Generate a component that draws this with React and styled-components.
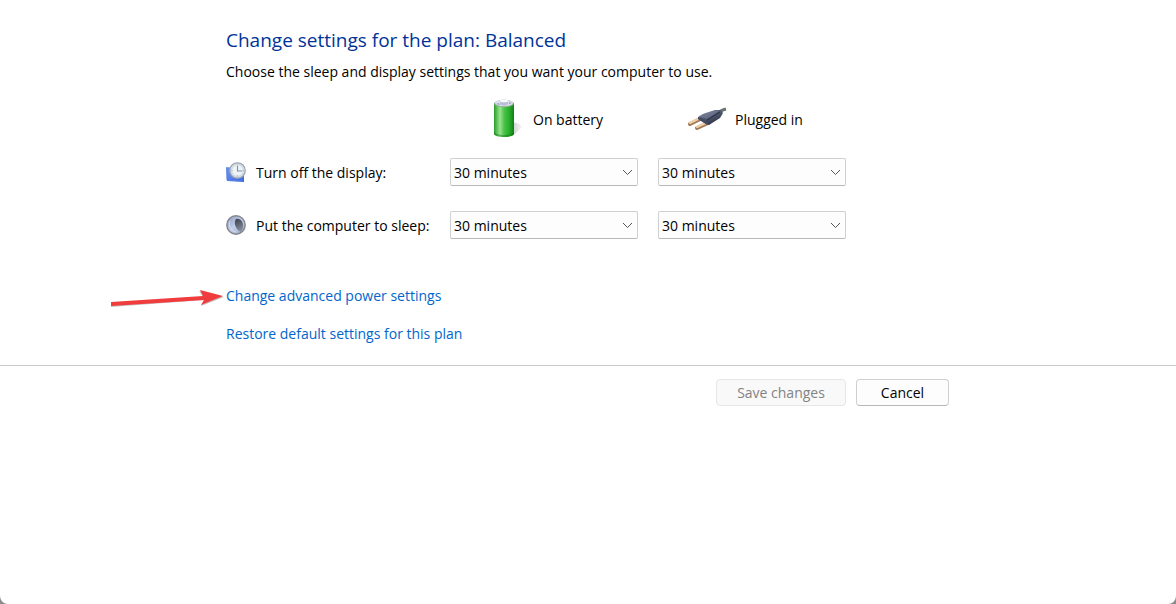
import React from "react";
import styled, { createGlobalStyle } from "styled-components";

const GlobalStyle = createGlobalStyle`
  * {
    box-sizing: border-box;
  }

  body {
    margin: 0;
    background: #8c8c8c;
    color: #000;
    font-family: "Segoe UI", "Open Sans", "Noto Sans", sans-serif;
    font-size: 14px;
    line-height: 20px;
  }

  button, select {
    font: inherit;
  }
`

const Window = styled.div`
  min-height: 100vh;
  background: #fff;
  border-radius: 0 0 8px 8px;
`

const Content = styled.main`
  padding: 26px 24px 21px 226px;
`

const Title = styled.h1`
  margin: 0 0 8px;
  font-size: 19px;
  line-height: 28px;
  font-weight: 400;
  color: #003399;
`

const Intro = styled.p`
  margin: 0 0 16px;
`

const Settings = styled.div`
  display: grid;
  grid-template-columns: 204px 188px 188px;
  column-gap: 20px;
  row-gap: 25px;
  align-items: center;
`

const Heads = styled.div`
  display: grid;
  grid-template-columns: 188px 188px;
  column-gap: 20px;
  margin: 0 0 18px 224px;
`

const ColumnHead = styled.div`
  display: flex;
  align-items: center;
  gap: 8px;
  height: 42px;
  padding-left: ${(props) => props.$inset};
`

const Label = styled.span`
  padding-top: 2px;
`

const RowLabel = styled.div`
  display: flex;
  align-items: center;
  gap: 10px;
  white-space: nowrap;
`

const SelectBox = styled.div`
  display: grid;
  align-items: center;

  > * {
    grid-area: 1 / 1;
  }

  > svg {
    justify-self: end;
    margin-right: 5px;
    pointer-events: none;
  }
`

const Select = styled.select`
  appearance: none;
  width: 100%;
  height: 28px;
  padding: 2px 24px 0 3px;
  border: 1px solid #d0d0d0;
  border-bottom-color: #b8b8b8;
  border-radius: 2px;
  background: #fdfdfd;
  color: #000;
`

const Links = styled.nav`
  display: flex;
  flex-direction: column;
  align-items: flex-start;
  gap: 18px;
  margin-top: 47px;
`

const Link = styled.a`
  position: relative;
  color: #0066cc;
  text-decoration: none;
`

const Arrow = styled.svg`
  position: absolute;
  right: 100%;
  top: 0;
`

const Footer = styled.footer`
  display: flex;
  gap: 10px;
  padding: 13px 24px 13px 716px;
  border-top: 1px solid #c8c8c8;
`

const Button = styled.button`
  height: 27px;
  width: ${(props) => (props.$wide ? "130px" : "93px")};
  padding: 0;
  border: 1px solid #d0d0d0;
  border-bottom-color: #b8b8b8;
  border-radius: 4px;
  background: #fdfdfd;
  color: #000;

  &:disabled {
    border-color: #e6e6e6;
    background: #f9f9f9;
    color: #838383;
  }
`

const BatteryIcon = () => (
  <svg width="40" height="42" viewBox="0 0 40 42" aria-hidden="true">
    <defs>
      <linearGradient id="cell">
        <stop offset="0" stopColor="#2c9a30" />
        <stop offset="0.15" stopColor="#5cc458" />
        <stop offset="0.3" stopColor="#9be292" />
        <stop offset="0.5" stopColor="#4cc547" />
        <stop offset="0.78" stopColor="#27ab2a" />
        <stop offset="1" stopColor="#0f8018" />
      </linearGradient>
      <linearGradient id="cellShadow">
        <stop offset="0" stopColor="#777" stopOpacity="0.7" />
        <stop offset="1" stopColor="#aaa" stopOpacity="0.1" />
      </linearGradient>
    </defs>
    <path d="M28 24 35 26 37 29 30 36 20 39z" fill="url(#cellShadow)" />
    <path d="M9 5v31c1 4 19 4 20 0V5z" fill="url(#cell)" />
    <path d="M9 34v2c1 4 19 4 20 0v-2c-2 4-18 4-20 0z" fill="#08700e" opacity="0.4" />
    <ellipse cx="19" cy="5.5" rx="10" ry="3.7" fill="#8fae97" />
    <ellipse cx="19" cy="5" rx="9" ry="3.2" fill="#dcdfec" />
    <path d="M15 3c1-2 7-2 8 0v3c-2 2-6 2-8 0z" fill="#b9bdd6" />
    <ellipse cx="19" cy="2.8" rx="4" ry="1.5" fill="#fafaff" />
    <path d="m11 6 3-1 1 2zm13-2 3 1-3 1z" fill="#9ba0bb" />
  </svg>
)

const PlugIcon = () => (
  <svg width="40" height="42" viewBox="0 0 40 42" aria-hidden="true">
    <defs>
      <linearGradient id="plug" x1="0" y1="0" x2="0.7" y2="1">
        <stop offset="0" stopColor="#7c849d" />
        <stop offset="0.5" stopColor="#515870" />
        <stop offset="1" stopColor="#292d3e" />
      </linearGradient>
    </defs>
    <path d="M31 14c3-1 4-2 8-3" fill="none" stroke="#69766f" strokeWidth="3" />
    <path d="m3 26 10-5M10 30l11-5" stroke="#a37a58" strokeWidth="4" strokeLinecap="round" />
    <path d="m3 25 10-5M10 29l11-5" stroke="#f0d2aa" strokeWidth="2" strokeLinecap="round" />
    <path d="m11 19 5-3 12-4 6 0 2 3-3 5-11 7-3-1-8-5z" fill="url(#plug)" />
    <path d="m11 19 8 3 3 5-3-1-8-5z" fill="#434a62" />
    <path d="m12 18 6-3 11-3 3 1-12 8z" fill="#8991ab" opacity="0.4" />
    <path d="m20 22 13-8" stroke="#252939" strokeWidth="1" />
  </svg>
)

const DisplayIcon = () => (
  <svg width="20" height="20" viewBox="0 0 20 20" aria-hidden="true">
    <defs>
      <linearGradient id="screen" x2="1" y2="1">
        <stop offset="0" stopColor="#7199ef" />
        <stop offset="1" stopColor="#3765df" />
      </linearGradient>
    </defs>
    <path d="M0 5 12 6 18 12v8L1 19z" fill="url(#screen)" />
    <path d="M1 6v12l16 1" fill="none" stroke="#5780e3" />
    <circle cx="11.5" cy="8.5" r="7.7" fill="#e1e5e8" stroke="#9ba7b2" strokeWidth="1.3" />
    <circle cx="11.5" cy="8.5" r="5.8" fill="#edf3f8" stroke="#cbd4dc" />
    <path d="M11.5 4v5H16" fill="none" stroke="#7d90a5" strokeWidth="1.1" />
    <path d="M11.5 2.5v1m0 10v1m-6-6h1m10 0h1" stroke="#9aabbb" />
  </svg>
)

const SleepIcon = () => (
  <svg width="20" height="20" viewBox="0 0 20 20" aria-hidden="true">
    <defs>
      <linearGradient id="moon" x2="1" y2="1">
        <stop offset="0" stopColor="#8797bd" />
        <stop offset="0.5" stopColor="#c3cfea" />
        <stop offset="1" stopColor="#97a4bb" />
      </linearGradient>
      <linearGradient id="night" x2="0.3" y2="1">
        <stop offset="0" stopColor="#3a3e4b" />
        <stop offset="1" stopColor="#858c9c" />
      </linearGradient>
    </defs>
    <circle cx="10" cy="10" r="9.2" fill="url(#moon)" stroke="#85868b" strokeWidth="1.4" />
    <path d="M10 4c7-2 9 8 5 13-5-2-8-9-5-13z" fill="url(#night)" />
    <path d="M4 6c-2 5 1 10 6 11" fill="none" stroke="#d5def3" />
  </svg>
)

const Chevron = () => (
  <svg width="11" height="7" viewBox="0 0 11 7" fill="none" stroke="#555" aria-hidden="true">
    <path d="m1 1 4.5 4.5L10 1" />
  </svg>
)

const rows = [
  { id: "display", label: "Turn off the display:", Icon: DisplayIcon },
  { id: "sleep", label: "Put the computer to sleep:", Icon: SleepIcon },
]

const TimeSelect = ({ labelledBy }) => (
  <SelectBox>
    <Select aria-labelledby={labelledBy} defaultValue="30 minutes">
      <option>15 minutes</option>
      <option>30 minutes</option>
      <option>1 hour</option>
      <option>Never</option>
    </Select>
    <Chevron />
  </SelectBox>
)

const App = () => (
  <>
    <GlobalStyle />
    <Window>
      <Content>
        <Title>Change settings for the plan: Balanced</Title>
        <Intro>Choose the sleep and display settings that you want your computer to use.</Intro>
        <Heads>
          <ColumnHead $inset="35px">
            <BatteryIcon />
            <Label id="battery">On battery</Label>
          </ColumnHead>
          <ColumnHead $inset="29px">
            <PlugIcon />
            <Label id="plugged">Plugged in</Label>
          </ColumnHead>
        </Heads>
        <Settings>
          {rows.map(({ id, label, Icon }) => (
            <React.Fragment key={id}>
              <RowLabel>
                <Icon />
                <Label id={id}>{label}</Label>
              </RowLabel>
              <TimeSelect labelledBy={`${id} battery`} />
              <TimeSelect labelledBy={`${id} plugged`} />
            </React.Fragment>
          ))}
        </Settings>
        <Links>
          <Link href="#advanced">
            Change advanced power settings
            <Arrow width="116" height="22" viewBox="0 0 116 22" aria-hidden="true">
              <path d="m1 17 92-6-4-6 25 6-23 9 3-6-93 7z" fill="#999" opacity="0.6" />
              <path d="m1 16 92-6-3-6 23 6-22 9 3-5-93 6z" fill="#f03c3c" />
            </Arrow>
          </Link>
          <Link href="#restore">Restore default settings for this plan</Link>
        </Links>
      </Content>
      <Footer>
        <Button $wide disabled>Save changes</Button>
        <Button>Cancel</Button>
      </Footer>
    </Window>
  </>
)

export default App;
